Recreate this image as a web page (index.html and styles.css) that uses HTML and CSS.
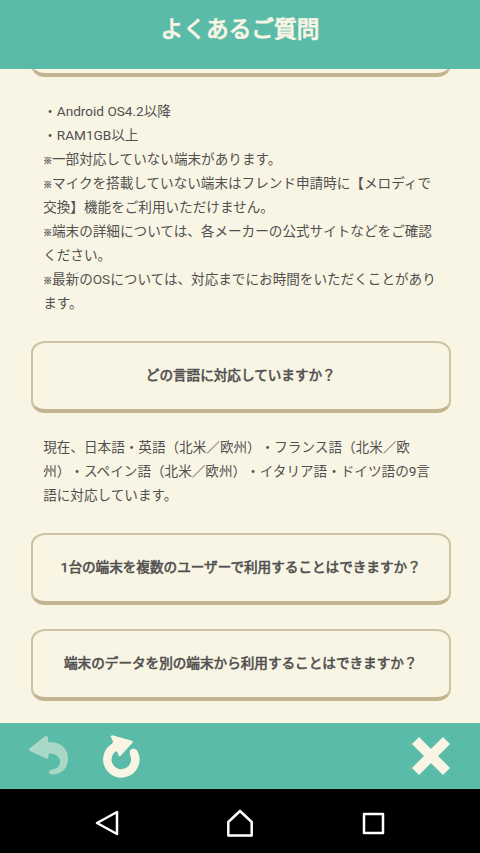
FILE: index.html
```html
<!DOCTYPE html>
<html lang="ja">
<head>
<meta charset="utf-8">
<title>よくあるご質問</title>
<link rel="stylesheet" href="styles.css">
</head>
<body>
<header class="header"><h1 class="title">よくあるご質問</h1></header>
<main class="content">
  <div class="question question-clipped"></div>
  <p class="answer">・Android OS4.2以降<br>・RAM1GB以上<br><span class="note">※</span>一部対応していない端末があります。<br><span class="note">※</span>マイクを搭載していない端末はフレンド申請時に【メロディで<br>交換】機能をご利用いただけません。<br><span class="note">※</span>端末の詳細については、各メーカーの公式サイトなどをご確認<br>ください。<br><span class="note">※</span>最新のOSについては、対応までにお時間をいただくことがあり<br>ます。</p>
  <h2 class="question">どの言語に対応していますか？</h2>
  <p class="answer">現在、日本語・英語（北米／欧州）・フランス語（北米／欧<br>州）・スペイン語（北米／欧州）・イタリア語・ドイツ語の9言<br>語に対応しています。</p>
  <h2 class="question">1台の端末を複数のユーザーで利用することはできますか？</h2>
  <h2 class="question">端末のデータを別の端末から利用することはできますか？</h2>
</main>
<nav class="toolbar">
  <svg class="icon-back" width="42" height="42" viewBox="0 0 42 42"><path d="M1.500 13.500 16.500 1.500Q20 0 20 3.500V7C33 7 40 13 40 23.500C40 33 34 39.500 24 39.500Q21 39.500 21 37Q21 35 24.500 34.500C30 33.500 32.500 30 32 26C31.500 21 27 18.500 20.500 18.500V21.500Q20.500 25 17 23L2 16Q0 15 1.500 13.500Z"/></svg>
  <svg class="icon-reload" width="42" height="46" viewBox="0 0 42 46"><path class="ring" d="M15.800 13.600A14 14 0 1 0 33.500 19.500"/><path class="ring-end" d="M33.500 19.500V20"/><path class="arrow" d="M12 3.500 31.500 9 19.800 22 18 17.500 12 14 14.500 8.500Z"/></svg>
  <svg class="icon-close" width="42" height="42" viewBox="0 0 42 42"><path d="M5.500 5.500 36.500 36.500M36.500 5.500 5.500 36.500"/></svg>
</nav>
<nav class="system">
  <svg width="26" height="28" viewBox="0 0 26 28"><path d="M23 3V25L3 14Z"/></svg>
  <svg width="30" height="30" viewBox="0 0 30 30"><path d="M15 3 26.700 14V27.500H3.300V14Z"/></svg>
  <svg width="26" height="26" viewBox="0 0 26 26"><path d="M4 4H23V23H4Z"/></svg>
</nav>
</body>
</html>
```
FILE: styles.css
```css
* { box-sizing: border-box; }
body {
  margin: 0;
  height: 853px;
  overflow: hidden;
  display: flex;
  flex-direction: column;
  background: #f9f5e4;
  color: #505050;
  font: 13.6px/24px Roboto, "Noto Sans CJK JP", sans-serif;
  text-spacing-trim: space-all;
}
.header {
  height: 69px;
  flex: none;
  background: #5abba9;
  text-align: center;
}
.title {
  margin: 0;
  padding-top: 12px;
  color: #f9f5e4;
  font-size: 22.7px;
  line-height: 36px;
  font-weight: 400;
  -webkit-text-stroke: 1px #f9f5e4;
}
.content {
  height: 654px;
  flex: none;
  overflow: hidden;
  padding: 0 29.500px 0 31px;
}
.question {
  height: 72px;
  margin: 0 0 24px;
  padding-bottom: 2px;
  border: 2px solid #cdc3a0;
  border-bottom: 4px solid #c1b48e;
  border-radius: 14px / 12px;
  display: flex;
  align-items: center;
  justify-content: center;
  font-size: 13.6px;
  font-weight: 400;
  -webkit-text-stroke: 0.6px #505050;
  white-space: nowrap;
}
.question-clipped { margin: -64px 0 22px; }
.answer {
  margin: -2px 0 26px;
  white-space: nowrap;
  padding-left: 12.200px;
}
.question-clipped + .answer { margin-top: 0; }
.note {
  display: inline-block;
  width: 8.800px;
  font-size: 9px;
  line-height: 1;
  -webkit-text-stroke: 0.3px #505050;
}
.toolbar {
  height: 66px;
  flex: none;
  display: flex;
  align-items: center;
  padding: 0 28px;
  background: #5abba9;
  fill: #f9f5e4;
}
.icon-back { opacity: .5; }
.icon-reload { margin-left: 30px; }
.icon-close { margin-left: auto; }
.ring { fill: none; stroke: #f9f5e4; stroke-width: 8.500; }
.ring-end { stroke: #f9f5e4; stroke-width: 7.500; stroke-linecap: round; }
.arrow { stroke: #f9f5e4; stroke-width: 2.500; stroke-linejoin: round; }
.icon-close { stroke: #f9f5e4; stroke-width: 10; }
.system {
  height: 64px;
  flex: none;
  display: flex;
  align-items: center;
  justify-content: space-between;
  padding: 4px 94px 0;
  background: #000;
  fill: none;
  stroke: #fff;
  stroke-width: 2.500;
  stroke-linejoin: round;
}
```
